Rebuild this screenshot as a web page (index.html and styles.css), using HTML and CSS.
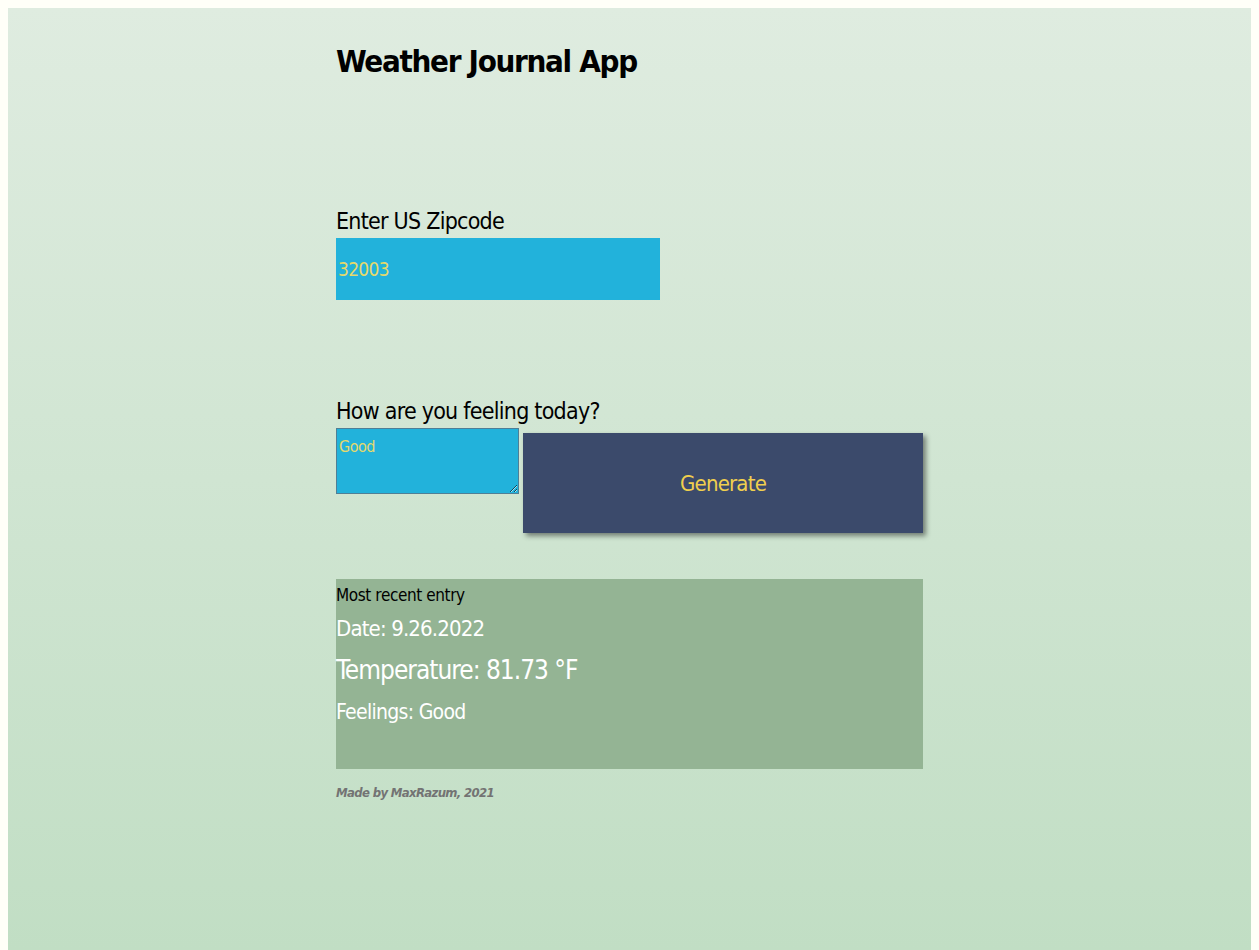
FILE: index.html
```html
<!DOCTYPE html>
<html>
<head>
<meta charset="utf-8">
<link rel="stylesheet" href="styles.css">
</head>
<body>
<div class="app">
  <main class="main">
    <h1 class="title">Weather Journal App</h1>
    <section class="zip">
      <label class="label" for="zip">Enter US Zipcode</label>
      <input class="zip-input" id="zip" type="text" value="32003">
    </section>
    <section class="feel">
      <label class="label" for="feelings">How are you feeling today?</label>
      <div class="feel-row">
        <textarea class="feel-input" id="feelings">Good</textarea>
        <button class="generate">Generate</button>
      </div>
    </section>
    <section class="entry">
      <div class="entry-title">Most recent entry</div>
      <div class="entry-date">Date: 9.26.2022</div>
      <div class="entry-temp">Temperature: 81.73 °F</div>
      <div class="entry-feel">Feelings: Good</div>
    </section>
    <footer class="footer">Made by MaxRazum, 2021</footer>
  </main>
</div>
</body>
</html>
```
FILE: styles.css
```css
html, body { margin: 0; padding: 0; }
body {
  background: #fffff8;
  padding: 8px 8px 0 8px;
  font-family: "DejaVu Sans Condensed", "Liberation Sans Narrow", sans-serif;
}
.app {
  min-height: 942px;
  background: linear-gradient(to bottom, #dfece0, #c1dec4);
  padding-left: 328px;
  box-sizing: border-box;
}
.main {
  width: 587px;
  padding-top: 31px;
}
.title {
  margin: 0;
  font-size: 31px;
  font-weight: bold;
  line-height: 44px;
  letter-spacing: -1.3px;
  color: #000;
}
.zip { margin-top: 121px; display: flex; flex-direction: column; }
.label {
  font-size: 23px;
  line-height: 34px;
  letter-spacing: -0.75px;
  color: #000;
}
.zip-input {
  width: 324px;
  height: 62px;
  box-sizing: border-box;
  border: none;
  background: #22b2db;
  color: #e6d96c;
  font-family: inherit;
  font-size: 19px;
  letter-spacing: -0.7px;
  padding: 0 2px;
  margin: 0;
  outline: none;
}
.feel { margin-top: 94px; display: flex; flex-direction: column; }
.feel-row { display: flex; align-items: flex-start; gap: 4px; }
.feel-input {
  width: 183px;
  height: 66px;
  box-sizing: border-box;
  border: 1px solid #4f7f96;
  background: #22b2db;
  color: #e6d96c;
  font-family: inherit;
  font-size: 16px;
  letter-spacing: -0.5px;
  padding: 8px 2px 0 2px;
  margin: 0;
  resize: both;
}
.generate {
  margin-top: 5px;
  width: 400px;
  height: 100px;
  border: none;
  background: #3b4a6b;
  color: #f0cf4e;
  font-family: inherit;
  font-size: 22px;
  letter-spacing: -0.8px;
  box-shadow: 3px 3px 5px rgba(0,0,0,0.45);
  padding: 0;
}
.entry {
  margin-top: 46px;
  height: 190px;
  box-sizing: border-box;
  background: #94b494;
  color: #fff;
}
.entry-title { font-size: 17px; line-height: 32px; letter-spacing: -0.4px; color: #000; }
.entry-date { font-size: 22px; line-height: 36px; letter-spacing: -0.85px; }
.entry-temp { font-size: 26px; line-height: 46px; letter-spacing: -1px; }
.entry-feel { font-size: 21px; line-height: 38px; letter-spacing: -0.7px; }
.footer {
  margin-top: 16px;
  font-size: 13px;
  font-style: italic;
  font-weight: bold;
  letter-spacing: -0.65px;
  color: #737373;
}
```
